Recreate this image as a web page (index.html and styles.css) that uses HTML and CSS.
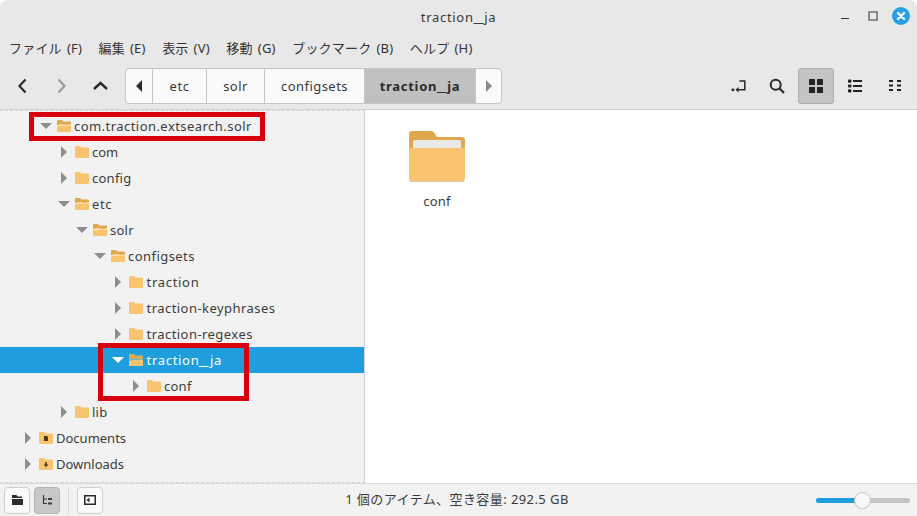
FILE: index.html
```html
<!DOCTYPE html>
<html lang="ja">
<head>
<meta charset="utf-8">
<title>traction_ja</title>
<link rel="stylesheet" href="styles.css">
</head>
<body>
<svg class="defs" width="0" height="0">
  <symbol id="closed" viewBox="0 0 14 12"><path d="M0 1.2Q0 0 1.2 0H5L6.5 1.6H12.8Q14 1.6 14 2.8V10.8Q14 12 12.8 12H1.2Q0 12 0 10.8Z" fill="#f8c46f"/></symbol>
  <symbol id="open" viewBox="0 0 14 12"><path d="M0 1Q0 0 1 0H5L6.5 1.5H13Q14 1.5 14 2.5V5H0Z" fill="#e0a94f"/><path d="M0 5.6Q5 4 7 4.6T14 4.4V11Q14 12 13 12H1Q0 12 0 11Z" fill="#f8c46f"/><path d="M0 5.5Q5 3.6 7 4.6T14 4.3V5.3Q9 6 7 5.6T0 6.6Z" fill="#fbeccb"/></symbol>
  <symbol id="openSel" viewBox="0 0 14 12"><path d="M0 1Q0 0 1 0H5L6.5 1.5H13Q14 1.5 14 2.5V5H0Z" fill="#e0a94f"/><path d="M0 5.6Q5 4 7 4.6T14 4.4V11Q14 12 13 12H1Q0 12 0 11Z" fill="#f8c46f"/><path d="M0 5.5Q5 3.6 7 4.6T14 4.3V5.8Q9 6.4 7 6T0 7Z" fill="#7fb5b0"/></symbol>
</svg>
<div class="window">
  <header class="titlebar">
    <span class="title ls4">traction<span class="us">_</span>ja</span>
    <div class="winbtns">
      <svg class="wb" width="10" height="10" viewBox="0 0 10 10"><path d="M1 7.5H9" stroke="#333" stroke-width="1"/></svg>
      <svg class="wb" width="10" height="10" viewBox="0 0 10 10"><rect x="1" y="1" width="8" height="8" fill="none" stroke="#333"/></svg>
      <svg class="wb-close" width="18" height="18" viewBox="0 0 18 18"><circle cx="9" cy="9" r="9" fill="#26a0e2"/><path d="M6 6L12 12M12 6L6 12" stroke="#fff" stroke-width="2.4" stroke-linecap="round"/></svg>
    </div>
  </header>
  <nav class="menubar">
    <span>ファイル (F)</span><span>編集 (E)</span><span>表示 (V)</span><span>移動 (G)</span><span>ブックマーク (B)</span><span>ヘルプ (H)</span>
  </nav>
  <div class="toolbar">
    <div class="navbtns">
      <svg width="39" height="20" viewBox="0 0 39 20"><path d="M22.5 3.5L16.5 10L22.5 16.5" fill="none" stroke="#2b2b2b" stroke-width="2.2"/></svg>
      <svg width="39" height="20" viewBox="0 0 39 20"><path d="M16.5 3.5L22.5 10L16.5 16.5" fill="none" stroke="#9a9a9a" stroke-width="2.2"/></svg>
      <svg width="39" height="20" viewBox="0 0 39 20"><path d="M13 13L19.5 7L26 13" fill="none" stroke="#2b2b2b" stroke-width="2.4"/></svg>
    </div>
    <div class="pathbar">
      <div class="seg arrow"><svg width="6" height="12" viewBox="0 0 6 12"><path d="M6 0V12L0 6Z" fill="#2b2b2b"/></svg></div>
      <div class="seg w-etc ls3">etc</div>
      <div class="seg w-solr ls2">solr</div>
      <div class="seg w-conf ls2">configsets</div>
      <div class="seg w-cur ls4">traction<span class="us">_</span>ja</div>
      <div class="seg arrow end"><svg width="6" height="12" viewBox="0 0 6 12"><path d="M0 0V12L6 6Z" fill="#8a8a8a"/></svg></div>
    </div>
    <div class="tools">
      <div class="tool"><svg width="15" height="13" viewBox="0 0 15 13"><path d="M8.5 1H13.8V9.7H6" fill="none" stroke="#2b2b2b" stroke-width="1.5"/><path d="M7.5 7V12.4L4.4 9.7Z" fill="#2b2b2b"/><rect x="0.5" y="8.4" width="2.8" height="2.8" rx="1.2" fill="#2b2b2b"/></svg></div>
      <div class="tool"><svg width="16" height="16" viewBox="0 0 16 16"><circle cx="6.7" cy="6.7" r="5" fill="none" stroke="#2b2b2b" stroke-width="2"/><path d="M10.3 10.3L15 15" stroke="#2b2b2b" stroke-width="2.2"/></svg></div>
      <div class="tool active"><svg width="14" height="14" viewBox="0 0 14 14"><g fill="#222"><rect width="6" height="6" rx=".6"/><rect x="8" width="6" height="6" rx=".6"/><rect y="8" width="6" height="6" rx=".6"/><rect x="8" y="8" width="6" height="6" rx=".6"/></g></svg></div>
      <div class="tool"><svg width="14" height="14" viewBox="0 0 14 14"><g fill="#222"><rect y="0.5" width="3.4" height="3.2" rx=".8"/><rect y="5.4" width="3.4" height="3.2" rx=".8"/><rect y="10.3" width="3.4" height="3.2" rx=".8"/><rect x="5" y="1" width="9" height="2"/><rect x="5" y="6" width="9" height="2"/><rect x="5" y="11" width="9" height="2"/></g></svg></div>
      <div class="tool"><svg width="13" height="12" viewBox="0 0 13 12"><g fill="#222"><rect x="1" width="4" height="2"/><rect x="9" width="4" height="2"/><rect x="1" y="4.5" width="4" height="2"/><rect x="9" y="4.5" width="4" height="2"/><rect x="1" y="9" width="4" height="2"/><rect x="9" y="9" width="4" height="2"/></g></svg></div>
    </div>
  </div>
  <div class="content">
    <aside class="sidebar">
      <div class="row d1"><i class="tri down"></i><svg class="ic"><use href="#open"/></svg><span class="ls2">com.traction.extsearch.solr</span></div>
      <div class="row d2"><i class="tri right"></i><svg class="ic"><use href="#closed"/></svg><span>com</span></div>
      <div class="row d2"><i class="tri right"></i><svg class="ic"><use href="#closed"/></svg><span class="ls1">config</span></div>
      <div class="row d2"><i class="tri down"></i><svg class="ic"><use href="#open"/></svg><span class="ls3">etc</span></div>
      <div class="row d3"><i class="tri down"></i><svg class="ic"><use href="#open"/></svg><span class="ls1">solr</span></div>
      <div class="row d4"><i class="tri down"></i><svg class="ic"><use href="#open"/></svg><span class="ls2">configsets</span></div>
      <div class="row d5"><i class="tri right"></i><svg class="ic"><use href="#closed"/></svg><span class="ls4">traction</span></div>
      <div class="row d5"><i class="tri right"></i><svg class="ic"><use href="#closed"/></svg><span class="ls2">traction-keyphrases</span></div>
      <div class="row d5"><i class="tri right"></i><svg class="ic"><use href="#closed"/></svg><span class="ls2">traction-regexes</span></div>
      <div class="row d5 selected"><i class="tri down"></i><svg class="ic"><use href="#openSel"/></svg><span class="ls4">traction<span class="us">_</span>ja</span></div>
      <div class="row d6"><i class="tri right"></i><svg class="ic"><use href="#closed"/></svg><span class="ls1">conf</span></div>
      <div class="row d2"><i class="tri right"></i><svg class="ic"><use href="#closed"/></svg><span class="ls1">lib</span></div>
      <div class="row d0"><i class="tri right"></i>
        <svg class="ic" viewBox="0 0 14 12"><use href="#closed" width="14" height="12"/><path d="M5 4H8L9 5V9H5Z" fill="#4a3a26"/></svg><span>Documents</span></div>
      <div class="row d0"><i class="tri right"></i>
        <svg class="ic" viewBox="0 0 14 12"><use href="#closed" width="14" height="12"/><path d="M6.2 4H7.8V6.6H9.3L7 9.2L4.7 6.6H6.2Z" fill="#4a3a26"/></svg><span>Downloads</span></div>
    </aside>
    <main class="files">
      <figure class="item">
        <svg width="56" height="51" viewBox="0 0 56 51">
          <path d="M0 3Q0 0 3 0H22Q24 0 25.5 2L28 6H53Q56 6 56 9V24H0Z" fill="#dfa84e"/>
          <rect x="4" y="9" width="48" height="20" rx="2" fill="#e8e8e8"/>
          <path d="M0 17H52Q56 17 56 14V47Q56 51 52 51H4Q0 51 0 47Z" fill="#f8c46f"/>
          <path d="M1 50.4Q2 51 4 51H52Q54 51 55 50.4" fill="none" stroke="#c9ccd2" stroke-width="1"/>
        </svg>
        <figcaption class="ls1">conf</figcaption>
      </figure>
    </main>
  </div>
  <footer class="statusbar">
    <div class="sbtns">
      <div class="sbtn"><svg width="11" height="10" viewBox="0 0 11 10"><path d="M0 0H4.5L5.5 1.5H10V3H0ZM0 4H11V10H0Z" fill="#2b2b2b"/></svg></div>
      <div class="sbtn on"><svg width="10" height="10" viewBox="0 0 10 10"><path d="M1.5 0V8.5H5M1.5 4H5" fill="none" stroke="#3a3a3a" stroke-width="1.2"/><path d="M6 3H10V5H6ZM6 7.500H10V9.500H6Z" fill="#3a3a3a"/></svg></div>
      <div class="sep"></div>
      <div class="sbtn"><svg width="12" height="10" viewBox="0 0 12 10"><rect x=".75" y=".75" width="10.5" height="8.5" fill="none" stroke="#2b2b2b" stroke-width="1.5"/><path d="M5.500 2.500V7.500L2.500 5Z" fill="#2b2b2b"/></svg></div>
    </div>
    <div class="status">1 個のアイテム、空き容量: 292.5 GB</div>
    <div class="slider"><div class="fill"></div><div class="thumb"></div></div>
  </footer>
  <div class="mark mark-a"></div>
  <div class="mark mark-b"></div>
</div>
</body>
</html>
```
FILE: styles.css
```css
html, body { margin: 0; padding: 0; background: #fff; }
body {
  font-family: "Noto Sans", "Noto Sans CJK JP", sans-serif;
  font-size: 13px;
  color: #303030;
}
.defs { position: absolute; }
.ls1 { letter-spacing: .25px; }
.ls2 { letter-spacing: .45px; }
.ls3 { letter-spacing: .6px; }
.ls4 { letter-spacing: .7px; }
.us { display: inline-block; padding: 0 2px; transform: scaleX(1.7); }
.window {
  position: relative;
  width: 917px;
  height: 516px;
  display: flex;
  flex-direction: column;
  overflow: hidden;
  border-radius: 7px 7px 0 0;
  background: #e8e8e8;
}
.titlebar {
  height: 33px;
  display: flex;
  align-items: center;
  justify-content: center;
  position: relative;
  flex: none;
}
.title { color: #3a3a3a; }
.winbtns {
  position: absolute;
  right: 7px;
  top: 7px;
  display: flex;
  align-items: center;
  gap: 18px;
}
.winbtns .wb-close { margin-left: -4px; }
.menubar {
  height: 28px;
  display: flex;
  align-items: center;
  gap: 16.5px;
  padding-left: 9px;
  flex: none;
  color: #333;
  letter-spacing: .2px;
  word-spacing: 1.5px;
}
.toolbar {
  height: 49px;
  box-sizing: border-box;
  display: flex;
  align-items: flex-start;
  padding: 7px 5px 0 3px;
  border-bottom: 1px solid #d2d2d2;
  flex: none;
}
.navbtns { display: flex; align-items: center; height: 36px; }
.pathbar {
  display: flex;
  height: 36px;
  box-sizing: border-box;
  margin-left: 5px;
  border: 1px solid #c6c6c6;
  border-radius: 4px;
  background: #fafafa;
  overflow: hidden;
}
.seg {
  display: flex;
  align-items: center;
  justify-content: center;
  box-sizing: border-box;
  border-right: 1px solid #c6c6c6;
  color: #3a3a3a;
}
.arrow { width: 27px; }
.arrow.end { border-right: 0; width: 25px; }
.w-etc { width: 54px; }
.w-solr { width: 58px; }
.w-conf { width: 100px; }
.w-cur { width: 111px; background: #c0c0c0; font-weight: 700; color: #2b2b2b; }
.tools { display: flex; margin-left: auto; gap: 3px; }
.tool {
  width: 36px;
  height: 36px;
  box-sizing: border-box;
  display: flex;
  align-items: center;
  justify-content: center;
  border: 1px solid transparent;
  border-radius: 3px;
}
.tool.active { background: #c4c4c4; border-color: #adadad; }
.content { flex: 1; display: flex; min-height: 0; }
.sidebar {
  width: 365px;
  box-sizing: border-box;
  background: #f2f2f2;
  border-right: 1px solid #d2d2d2;
  border-top: 1px dashed #d6d6d6;
  border-bottom: 1px dashed #d6d6d6;
  padding-top: 2px;
  overflow: hidden;
  color: #3c3c3c;
  position: relative;
}
.row {
  height: 26px;
  display: flex;
  align-items: center;
  box-sizing: border-box;
}
.row .tri { flex: none; width: 0; height: 0; margin-right: 8px; }
.tri.right { border-left: 6px solid #8e8e8e; border-top: 6px solid transparent; border-bottom: 6px solid transparent; margin-left: 0; }
.tri.down { border-top: 6px solid #8e8e8e; border-left: 6px solid transparent; border-right: 6px solid transparent; margin-left: -3px; margin-right: 5px; }
.ic { width: 14px; height: 12px; margin-right: 3px; flex: none; }
.d0 { padding-left: 25px; }
.d1 { padding-left: 43px; }
.d2 { padding-left: 61px; }
.d3 { padding-left: 79px; }
.d4 { padding-left: 97px; }
.d5 { padding-left: 115px; }
.d5 > span { margin-left: .5px; }
.d6 { padding-left: 133px; }
.selected { background: #1f9ede; color: #fff; }
.selected .tri.down { border-top-color: #fff; }
.files { flex: 1; background: #fff; padding: 21px 0 0 44px; }
.item {
  margin: 0;
  width: 56px;
  display: flex;
  flex-direction: column;
  align-items: center;
}
.item figcaption { margin-top: 10px; color: #3c3c3c; }
.statusbar {
  height: 33px;
  flex: none;
  box-sizing: border-box;
  background: #f2f2f2;
  border-top: 1px solid #d8d8d8;
  display: grid;
  grid-template-columns: 1fr auto 1fr;
  align-items: center;
  padding: 0 7px 0 4px;
}
.sbtns { display: flex; align-items: center; gap: 4px; }
.sbtn {
  width: 26px;
  height: 27px;
  box-sizing: border-box;
  display: flex;
  align-items: center;
  justify-content: center;
  border: 1px solid #cfcfcf;
  border-radius: 4px;
  background: #fafafa;
}
.sbtn.on { background: #c8c8c8; border-color: #b4b4b4; }
.sep { width: 1px; height: 27px; background: #d8d8d8; margin: 0 4px; }
.status { color: #3a3a3a; letter-spacing: .42px; margin-bottom: 3px; }
.slider {
  justify-self: end;
  width: 94px;
  height: 5px;
  background: #c4c4c4;
  border-radius: 3px;
  position: relative;
}
.fill { width: 47px; height: 5px; background: #1f9ede; border-radius: 3px 0 0 3px; }
.thumb {
  position: absolute;
  left: 38px;
  top: -6px;
  width: 17px;
  height: 17px;
  box-sizing: border-box;
  border: 1px solid #c2c2c2;
  border-radius: 50%;
  background: #f8f8f8;
}
.mark {
  position: absolute;
  box-sizing: border-box;
  border: 5px solid #d9000d;
}
.mark-a { left: 29px; top: 112px; width: 236px; height: 29px; }
.mark-b { left: 98px; top: 343px; width: 151px; height: 58px; }
```
